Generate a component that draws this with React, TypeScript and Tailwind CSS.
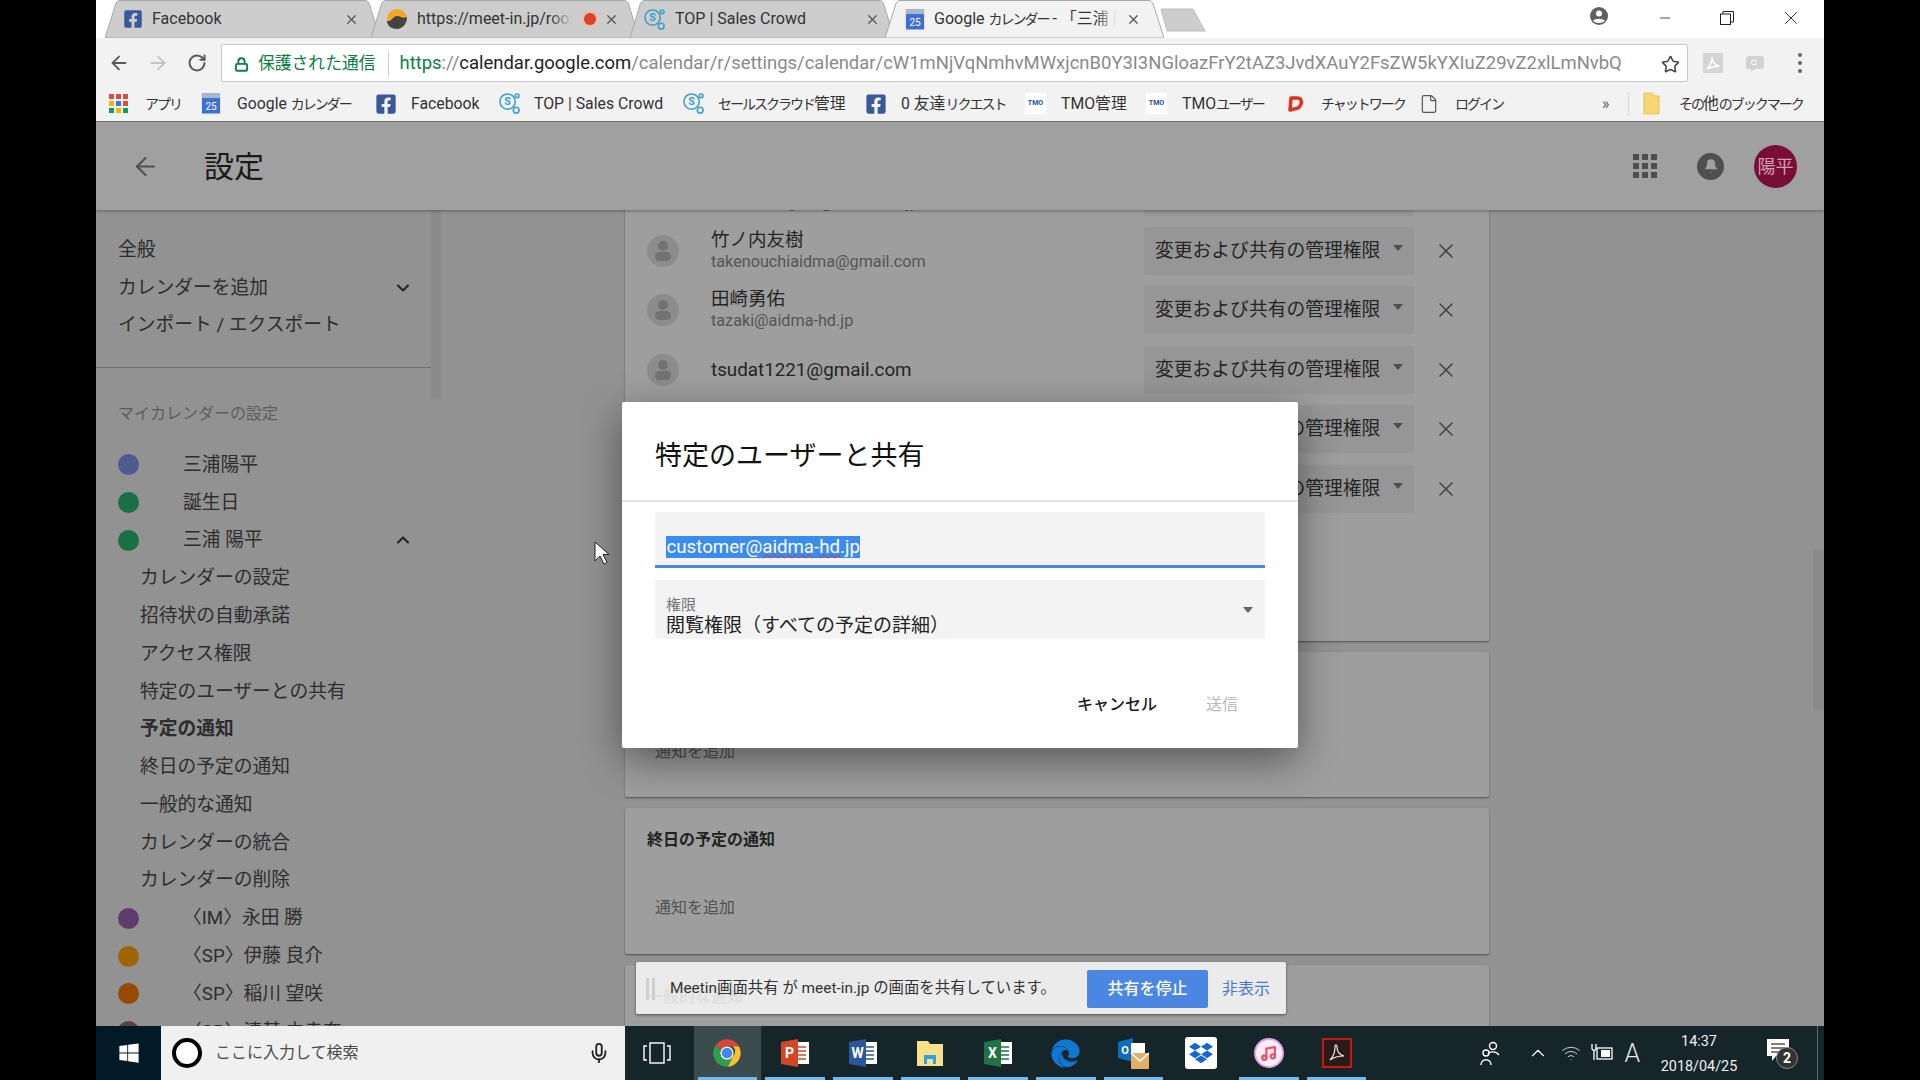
import { ArrowLeft, ArrowRight, RotateCw, Lock, Star, X, ChevronDown, ChevronUp, Bell, Mic, Minus, Wifi, Music, File } from 'lucide-react';
import { FaFacebookSquare, FaWindows, FaEdge, FaDropbox } from 'react-icons/fa';
import type { ReactNode } from 'react';

const font = "font-['Roboto','Noto_Sans_CJK_JP',sans-serif]";

// kana in the browser chrome is narrower than the kanji next to it
function K({ children }: { children: ReactNode }) {
  return <span className="text-[14px] tracking-[-2px]">{children}</span>;
}

function FbIcon({ size = 22 }: { size?: number }) {
  return <FaFacebookSquare size={size} className="text-[#3b5998] shrink-0" />;
}

function CalIcon() {
  return (
    <svg viewBox="0 0 22 24" className="w-[20px] h-[23px] shrink-0">
      <rect x="1" y="1" width="20" height="22" fill="#3f6fd1" />
      <rect x="1" y="1" width="20" height="5" fill="#a9b8c9" />
      <text x="11" y="19" textAnchor="middle" fontSize="11" fill="#fff" fontFamily="Roboto">25</text>
    </svg>
  );
}

function CrowdIcon() {
  return (
    <svg viewBox="0 0 24 24" className="w-[23px] h-[23px] shrink-0" fill="none" stroke="#3c9fc9" strokeWidth="1.6">
      <circle cx="10" cy="10" r="8" />
      <circle cx="20" cy="4" r="2" />
      <circle cx="19" cy="19" r="3" />
      <text x="10" y="14" textAnchor="middle" fontSize="11" fill="#3c9fc9" stroke="none" fontFamily="Roboto" fontWeight="700">S</text>
    </svg>
  );
}

function TmoIcon() {
  return (
    <span className="w-[21px] h-[21px] bg-white flex items-center justify-center shrink-0 text-[7px] font-bold text-[#1a4fa0] font-['Roboto',sans-serif]">
      TMO
    </span>
  );
}

function AppsIcon() {
  const colors = ['#e04b3a', '#e04b3a', '#e04b3a', '#f4b400', '#3b78e7', '#e04b3a', '#0f9d58', '#f4b400', '#0f9d58'];
  return (
    <span className="grid grid-cols-3 gap-[2px] w-[19px] shrink-0">
      {colors.map((c, i) => (
        <svg key={i} viewBox="0 0 5 5" className="w-[5px] h-[5px]">
          <rect width="5" height="5" fill={c} />
        </svg>
      ))}
    </span>
  );
}

function Tab({ box, active, icon, title, extra, fade }: { box: string; active?: boolean; icon: ReactNode; title: ReactNode; extra?: ReactNode; fade?: boolean }) {
  return (
    <div className={`relative h-[38px] shrink-0 -mr-[9px] flex items-center gap-[9px] ${box} ${active ? 'z-10' : ''}`}>
      <svg viewBox="0 0 100 38" preserveAspectRatio="none" className="absolute inset-0 w-full h-full">
        <polygon
          points="0,38 4,3 5,0.5 95,0.5 96,3 100,38"
          fill={active ? '#f2f2f2' : '#cdcdcd'}
          stroke="#a8a8a8"
          strokeWidth="1"
          vectorEffect="non-scaling-stroke"
        />
      </svg>
      <span className="relative shrink-0 flex">{icon}</span>
      <span className="relative flex-1 overflow-hidden whitespace-nowrap text-[16px] text-[#333]">
        {title}
        {fade && (
          <span className={`absolute right-0 top-0 bottom-0 w-[22px] bg-gradient-to-l to-transparent ${active ? 'from-[#f2f2f2]' : 'from-[#cdcdcd]'}`} />
        )}
      </span>
      {extra && <span className="relative shrink-0 flex -mr-[4px]">{extra}</span>}
      <X size={15} className="relative shrink-0 text-[#555]" />
    </div>
  );
}

function TabStrip() {
  return (
    <div className="h-[38px] bg-white flex items-end pl-[9px] relative">
      <Tab box="w-[275px] pl-[18px] pr-[21px]" title="Facebook" icon={<FbIcon size={20} />} />
      <Tab
        box="w-[268px] pl-[15px] pr-[20px]"
        title="https://meet-in.jp/room"
        fade
        icon={
          <svg viewBox="0 0 22 22" className="w-[22px] h-[22px]">
            <circle cx="11" cy="11" r="10" fill="#f5a623" />
            <path d="M1 13c5 1 6-5 10-5s5 3 10 1c0 7-5 12-10 12S1 18 1 13z" fill="#444" />
          </svg>
        }
        extra={
          <svg viewBox="0 0 18 18" className="w-[18px] h-[18px]">
            <circle cx="9" cy="9" r="8" fill="#f3b8a8" />
            <circle cx="9" cy="9" r="6" fill="#d9432b" />
          </svg>
        }
      />
      <Tab box="w-[264px] pl-[13px] pr-[14px]" title="TOP | Sales Crowd" icon={<CrowdIcon />} />
      <Tab
        box="w-[279px] pl-[20px] pr-[23px]"
        active
        fade
        title={<>Google <K>カレンダー</K> - 「三浦 陽平</>}
        icon={<CalIcon />}
      />
      <svg viewBox="0 0 46 24" className="w-[46px] h-[24px] ml-[5px] mb-[6px] shrink-0">
        <polygon points="1,1 33,1 45,23 7,23" fill="#cdcdcd" stroke="#bdbdbd" />
      </svg>
      <div className="ml-auto flex items-center self-start h-[36px]">
        <svg viewBox="0 0 20 20" className="w-[20px] h-[20px] mr-[48px] mt-[-4px]">
          <circle cx="10" cy="10" r="9" fill="#606060" />
          <circle cx="10" cy="7.5" r="3" fill="#fff" />
          <path d="M4 15c2-3 10-3 12 0-3 2.500-9 2.500-12 0z" fill="#fff" />
        </svg>
        <Minus size={16} strokeWidth={1.2} className="text-[#222] mr-[47px]" />
        <svg viewBox="0 0 14 14" className="w-[14px] h-[14px] mr-[46px]" fill="none" stroke="#222">
          <rect x="0.500" y="3" width="10" height="10.500" />
          <path d="M3 3V0.500h10.500V11H11" />
        </svg>
        <X size={22} strokeWidth={1} className="text-[#222] mr-[22px]" />
      </div>
    </div>
  );
}

function Toolbar() {
  return (
    <div className="h-[50px] bg-[#f2f2f2] flex items-center pl-[4px]">
      <div className="w-[38px] flex justify-center">
        <ArrowLeft size={22} className="text-[#5a5a5a]" />
      </div>
      <div className="w-[39px] flex justify-center">
        <ArrowRight size={22} className="text-[#c4c4c4]" />
      </div>
      <div className="w-[39px] flex justify-center">
        <RotateCw size={20} strokeWidth={2.4} className="text-[#5a5a5a]" />
      </div>
      <div className="ml-[5px] w-[1467px] h-[38px] bg-white border border-[#c9c9c9] rounded-[2px] flex items-center pl-[12px] pt-[2px] whitespace-nowrap overflow-hidden">
        <Lock size={15} strokeWidth={3} className="text-[#0b8043] shrink-0" />
        <span className="ml-[9px] text-[16.8px] text-[#0b8043]">保護された通信</span>
        <span className="ml-[13px] w-px h-[26px] bg-[#cfcfcf]" />
        <span className="ml-[10px] text-[18.47px] text-[#8a8a8a]">
          <span className="text-[#0b8043]">https</span>://<span className="text-[#222]">calendar.google.com</span>
          /calendar/r/settings/calendar/cW1mNjVqNmhvMWxjcnB0Y3I3NGloazFrY2tAZ3JvdXAuY2FsZW5kYXIuZ29vZ2xlLmNvbQ
        </span>
        <Star size={19} strokeWidth={2} className="ml-auto mr-[7px] text-[#444] shrink-0" />
      </div>
      <svg viewBox="0 0 20 20" className="ml-[15px] w-[20px] h-[20px] shrink-0">
        <rect width="20" height="20" fill="#d5d5d5" />
        <path d="M4 16c3-3 5-8 5-12 0 5 3 8 7 9-4 0-8 1-12 3z" fill="none" stroke="#fff" strokeWidth="1.400" />
      </svg>
      <svg viewBox="0 0 20 20" className="ml-[22px] w-[20px] h-[20px] shrink-0">
        <rect x="1" y="3" width="18" height="13" rx="2" fill="#d2d2d2" />
        <path d="M6 16v3l4-3z" fill="#d2d2d2" />
        <circle cx="9" cy="9.500" r="2.500" fill="none" stroke="#fff" />
      </svg>
      <div className="ml-[33px] flex flex-col gap-[4px]">
        <svg viewBox="0 0 4 4" className="w-[4px] h-[4px]"><circle cx="2" cy="2" r="2" fill="#666" /></svg>
        <svg viewBox="0 0 4 4" className="w-[4px] h-[4px]"><circle cx="2" cy="2" r="2" fill="#666" /></svg>
        <svg viewBox="0 0 4 4" className="w-[4px] h-[4px]"><circle cx="2" cy="2" r="2" fill="#666" /></svg>
      </div>
    </div>
  );
}

function Bookmark({ w, icon, label }: { w: string; icon: ReactNode; label: ReactNode }) {
  return (
    <div className={`flex items-center shrink-0 ${w}`}>
      <span className="w-[36px] shrink-0 flex">{icon}</span>
      <span className="text-[15.8px] text-[#333] whitespace-nowrap">{label}</span>
    </div>
  );
}

function BookmarkBar() {
  return (
    <div className="h-[34px] bg-[#f2f2f2] border-b border-[#6f6f6f] flex items-center pl-[13px] pb-[2px]">
      <Bookmark w="w-[92px]" icon={<AppsIcon />} label={<K>アプリ</K>} />
      <Bookmark w="w-[174px]" icon={<CalIcon />} label={<>Google <K>カレンダー</K></>} />
      <Bookmark w="w-[123px]" icon={<FbIcon />} label="Facebook" />
      <Bookmark w="w-[184px]" icon={<CrowdIcon />} label="TOP | Sales Crowd" />
      <Bookmark w="w-[183px]" icon={<CrowdIcon />} label={<><K>セールスクラウド</K>管理</>} />
      <Bookmark w="w-[160px]" icon={<FbIcon />} label={<>0 友達<K>リクエスト</K></>} />
      <Bookmark w="w-[121px]" icon={<TmoIcon />} label="TMO管理" />
      <Bookmark w="w-[139px]" icon={<TmoIcon />} label={<>TMO<K>ユーザー</K></>} />
      <Bookmark
        w="w-[134px]"
        icon={
          <svg viewBox="0 0 20 20" className="w-[20px] h-[20px]" fill="none" stroke="#e0321c" strokeWidth="3.500" strokeLinejoin="round">
            <path d="M5 16l1-12h6c4 0 5 3 4 6s-3 5-7 5z" />
          </svg>
        }
        label={<K>チャットワーク</K>}
      />
      <Bookmark w="w-[183px]" icon={<File size={20} strokeWidth={1.400} className="text-[#555]" />} label={<K>ログイン</K>} />
      <span className="text-[16px] text-[#555] w-[26px]">»</span>
      <span className="w-px h-[24px] bg-[#d5d5d5] mr-[14px]" />
      <Bookmark
        w="w-[180px]"
        icon={
          <svg viewBox="0 0 18 24" className="w-[17px] h-[23px]">
            <path d="M1 1h9l2 3h5v19H1z" fill="#f7d774" stroke="#e3c25a" />
          </svg>
        }
        label={<><K>その</K>他<K>のブックマーク</K></>}
      />
    </div>
  );
}

function AppHeader() {
  return (
    <div className="h-[88px] shrink-0 bg-[#a0a0a0] relative z-10 shadow-[0_1px_3px_rgba(0,0,0,0.35)] flex items-center pl-[35px]">
      <ArrowLeft size={29} strokeWidth={1.700} className="text-[#4f4f4f]" />
      <span className="ml-[44px] mt-[1px] text-[30px] text-[#1a1a1a]">設定</span>
      <div className="ml-auto grid grid-cols-3 gap-[3px] w-[24px] mr-[40px]">
        {Array.from({ length: 9 }).map((_, i) => (
          <svg key={i} viewBox="0 0 6 6" className="w-[6px] h-[6px]">
            <rect width="6" height="6" fill="#4f4f4f" />
          </svg>
        ))}
      </div>
      <div className="w-[27px] h-[27px] rounded-full bg-[#4f4f4f] flex items-center justify-center mr-[30px]">
        <Bell size={16} fill="#a0a0a0" strokeWidth={0} />
      </div>
      <div className="w-[43px] h-[43px] rounded-full bg-[#780e35] flex items-center justify-center text-[18px] text-[#d0a0b2] mr-[27px]">
        陽平
      </div>
    </div>
  );
}

function Dot({ color }: { color: string }) {
  return <span className={`w-[21px] h-[21px] rounded-full shrink-0 ${color}`} />;
}

function SideRow({ children, className = '' }: { children: ReactNode; className?: string }) {
  return <div className={`h-[37.800px] flex items-center text-[18.750px] text-[#2d2d2d] whitespace-nowrap ${className}`}>{children}</div>;
}

function CalRow({ color, name, chevron }: { color: string; name: string; chevron?: boolean }) {
  return (
    <SideRow className="pl-[22px]">
      <Dot color={color} />
      <span className="ml-[44px]">{name}</span>
      {chevron && <ChevronUp size={20} strokeWidth={2.500} className="absolute left-[297px] text-[#222]" />}
    </SideRow>
  );
}

function Sidebar() {
  return (
    <div className="w-[335px] shrink-0 pt-[21px] relative">
      <SideRow className="pl-[22px]">全般</SideRow>
      <SideRow className="pl-[22px] relative">
        カレンダーを追加
        <ChevronDown size={20} strokeWidth={2.500} className="absolute left-[297px] text-[#222]" />
      </SideRow>
      <SideRow className="pl-[22px]">インポート / エクスポート</SideRow>
      <div className="mt-[23px] border-t border-[#6f6f6f]" />
      <div className="pl-[22px] pt-[35.500px] text-[16px] leading-[20px] text-[#5e5e5e]">マイカレンダーの設定</div>
      <div className="mt-[22px]">
        <CalRow color="bg-[#4e5a90]" name="三浦陽平" />
        <CalRow color="bg-[#1b6f46]" name="誕生日" />
        <CalRow color="bg-[#1b6f46]" name="三浦 陽平" chevron />
        <SideRow className="pl-[44px]">カレンダーの設定</SideRow>
        <SideRow className="pl-[44px]">招待状の自動承諾</SideRow>
        <SideRow className="pl-[44px]">アクセス権限</SideRow>
        <SideRow className="pl-[44px]">特定のユーザーとの共有</SideRow>
        <SideRow className="pl-[44px] font-bold text-[#1f1f1f]">予定の通知</SideRow>
        <SideRow className="pl-[44px]">終日の予定の通知</SideRow>
        <SideRow className="pl-[44px]">一般的な通知</SideRow>
        <SideRow className="pl-[44px]">カレンダーの統合</SideRow>
        <SideRow className="pl-[44px]">カレンダーの削除</SideRow>
        <CalRow color="bg-[#603c6c]" name="〈IM〉永田 勝" />
        <CalRow color="bg-[#a06502]" name="〈SP〉伊藤 良介" />
        <CalRow color="bg-[#984905]" name="〈SP〉稲川 望咲" />
        <CalRow color="bg-[#5c4239]" name="〈SP〉清基 由幸奈" />
      </div>
      <div className="absolute left-[335px] top-0 w-[10px] h-[189px] bg-[#8a8a8a]" />
    </div>
  );
}

function ShareRow({ name, email }: { name?: string; email?: string }) {
  return (
    <div className="h-[59.400px] flex items-center">
      <span className="ml-[22px] w-[32px] h-[32px] rounded-full bg-[#8c8c8c] flex flex-col items-center justify-center gap-[1px] shrink-0">
        <span className="w-[10px] h-[10px] rounded-full bg-[#727272]" />
        <span className="w-[16px] h-[9px] rounded-full bg-[#727272]" />
      </span>
      <div className={`ml-[32px] flex-1 min-w-0 ${name ? 'pb-[2px]' : ''}`}>
        {name && <div className="text-[18.500px] leading-[24px] text-[#252525]">{name}</div>}
        {email && <div className={name ? 'text-[16.200px] leading-[20px] text-[#555]' : 'text-[18.800px] text-[#252525]'}>{email}</div>}
      </div>
      <div className="ml-[1px] w-[270px] h-[48px] bg-[#969696] rounded-[2px] flex items-center pl-[11px] shrink-0">
        <span className="text-[18.800px] text-[#252525] whitespace-nowrap">変更および共有の管理権限</span>
        <svg viewBox="0 0 10 6" className="ml-[13px] mb-[6px] w-[10px] h-[6px]">
          <path d="M0 0h10L5 6z" fill="#4f4f4f" />
        </svg>
      </div>
      <X size={24} strokeWidth={1.600} className="ml-[20px] mr-[31px] text-[#444]" />
    </div>
  );
}

function NoticeCard({ h, title, bottom }: { h: string; title: string; bottom?: string }) {
  return (
    <div className={`mt-[11px] ${h} bg-[#9e9e9e] rounded-[2px] shadow-[0_1px_2px_rgba(0,0,0,0.45)] pl-[22px] pt-[22px] shrink-0`}>
      <div className="text-[16px] leading-[20px] font-bold text-[#222]">{title}</div>
      {bottom && <div className="mt-[48px] pl-[8px] text-[16px] leading-[20px] text-[#525252]">{bottom}</div>}
    </div>
  );
}

function CalendarApp() {
  return (
    <div className="flex-1 min-h-0 bg-[#929292] flex flex-col relative overflow-hidden">
      <AppHeader />
      <div className="flex flex-1 min-h-0 overflow-hidden">
        <Sidebar />
        <div className="ml-[194px] w-[864px] shrink-0 -mt-[48px]">
          <div className="h-[479px] bg-[#9e9e9e] rounded-[2px] shadow-[0_1px_2px_rgba(0,0,0,0.45)]">
            <ShareRow name="三浦 陽平" email="masaru.nagata@aidma-hd.jp" />
            <ShareRow name="竹ノ内友樹" email="takenouchiaidma@gmail.com" />
            <ShareRow name="田崎勇佑" email="tazaki@aidma-hd.jp" />
            <ShareRow email="tsudat1221@gmail.com" />
            <ShareRow />
            <ShareRow />
          </div>
          <NoticeCard h="h-[145px]" title="予定の通知" bottom="通知を追加" />
          <NoticeCard h="h-[146px]" title="終日の予定の通知" bottom="通知を追加" />
          <NoticeCard h="h-[146px]" title="一般的な通知" bottom="通知を追加" />
        </div>
      </div>
      <div className="absolute left-[1717px] top-[428px] w-[11px] h-[160px] bg-[#8a8a8a]" />
    </div>
  );
}

function ShareDialog() {
  return (
    <div className="absolute left-[526px] top-[402px] w-[676px] h-[346px] bg-white rounded-[2px] shadow-[0_12px_40px_rgba(0,0,0,0.45)] z-20 flex flex-col">
      <div className="h-[100px] border-b-2 border-[#e4e4e4] pl-[33px] pt-[10px] flex items-center text-[27px] text-[#111] shrink-0">
        特定のユーザーと共有
      </div>
      <div className="mx-[33px] mt-[10px] h-[56px] bg-[#f3f3f3] border-b-[3px] border-[#4a86e2] rounded-t-[2px] pl-[11px] flex items-end pb-[7px] shrink-0">
        <span className="bg-[#3b8cf0] text-white text-[18.700px] leading-[22px] px-[0.500px] font-['Roboto',sans-serif]">
          customer@<span className="underline decoration-wavy decoration-[#e0263c] decoration-1 underline-offset-1">aidma</span>-
          <span className="underline decoration-wavy decoration-[#e0263c] decoration-1 underline-offset-1">hd</span>.jp
        </span>
      </div>
      <div className="mx-[33px] mt-[12px] h-[59px] bg-[#f3f3f3] rounded-[2px] pl-[11px] pr-[12px] pt-[12px] flex items-center shrink-0">
        <div className="flex-1 min-w-0">
          <div className="text-[15px] leading-[20px] text-[#757575]">権限</div>
          <div className="text-[19px] leading-[22px] text-[#222]">閲覧権限（すべての予定の詳細）</div>
        </div>
        <svg viewBox="0 0 10 6" className="w-[10px] h-[6px] -mt-[12px]">
          <path d="M0 0h10L5 6z" fill="#666" />
        </svg>
      </div>
      <div className="mt-[44px] flex justify-end items-center pr-[60px] gap-[49px] text-[16px] leading-[44px]">
        <span className="font-medium text-[#1a1a1a]">キャンセル</span>
        <span className="text-[#b9b9b9]">送信</span>
      </div>
    </div>
  );
}

function ShareBanner() {
  return (
    <div className="absolute left-[540px] top-[962px] w-[650px] h-[52px] bg-[#f3f3f3]/90 rounded-[2px] shadow-[0_1px_3px_rgba(0,0,0,0.5)] z-20 flex items-center pl-[10px] pt-[1px] text-[16px] whitespace-nowrap">
      <span className="flex gap-[3px] mr-[15px]">
        <span className="w-[3px] h-[22px] bg-[#cfcfcf]" />
        <span className="w-[3px] h-[22px] bg-[#cfcfcf]" />
      </span>
      <span className="text-[#333] w-[417px] text-[15.400px]">Meetin画面共有 が meet-in.jp の画面を共有しています。</span>
      <span className="w-[121px] h-[38px] bg-[#4a86e2] rounded-[2px] text-white font-medium flex items-center justify-center">共有を停止</span>
      <span className="ml-[14px] text-[#4a78c8]">非表示</span>
    </div>
  );
}

function Cursor() {
  return (
    <svg viewBox="0 0 16 24" className="absolute left-[498px] top-[541px] w-[16px] h-[24px] z-30">
      <path d="M1 1v19l5-5 4 8 3-1.500-4-8h6z" fill="#fff" stroke="#222" strokeWidth="1" />
    </svg>
  );
}

function OfficeIcon({ color, letter }: { color: string; letter: string }) {
  return (
    <svg viewBox="0 0 30 30" className="w-[30px] h-[30px]">
      <rect x="13" y="4" width="16" height="22" fill="#fff" />
      <path d="M17 9h9M17 13h9M17 17h9M17 21h9" stroke={color} strokeWidth="1.500" />
      <path d="M1 4l17-3v28L1 26z" fill={color} />
      <text x="9.500" y="20" textAnchor="middle" fontSize="14" fontWeight="700" fill="#fff" fontFamily="Roboto">{letter}</text>
    </svg>
  );
}

function TaskItem({ active, running = true, children }: { active?: boolean; running?: boolean; children: ReactNode }) {
  return (
    <div className={`relative w-[67.700px] h-full flex items-center justify-center shrink-0 ${active ? 'bg-[#3b4b4d]' : ''}`}>
      {children}
      {running && <span className="absolute bottom-0 left-[4px] right-[4px] h-[3px] bg-[#76b9ed]" />}
    </div>
  );
}

function Taskbar() {
  return (
    <div className="h-[54px] shrink-0 bg-[#15252a] flex items-center text-white relative z-30">
      <div className="w-[65px] h-full bg-[#021a26] flex items-center justify-center shrink-0">
        <FaWindows size={22} />
      </div>
      <div className="w-[464px] h-full bg-[#f0f0f0] flex items-center pl-[11px] pr-[15px] shrink-0">
        <span className="w-[30px] h-[30px] rounded-full border-[4px] border-black bg-white shrink-0" />
        <span className="ml-[13px] text-[16px] text-[#4c4c4c]">ここに入力して検索</span>
        <Mic size={22} className="ml-auto text-[#222]" />
      </div>
      <div className="w-[69px] flex justify-center pr-[6px] shrink-0">
        <svg viewBox="0 0 28 22" className="w-[28px] h-[22px]" fill="none" stroke="#fff" strokeWidth="1.400">
          <rect x="7" y="1" width="14" height="20" />
          <path d="M4 4H1v14h3M24 4h3v14h-3" />
        </svg>
      </div>
      <div className="flex h-full -ml-[0.500px]">
        <TaskItem active>
          <svg viewBox="0 0 48 48" className="w-[30px] h-[30px]">
            <path d="M43.050 13A22 22 0 0 1 25 46l8.500-16.500A11 11 0 0 0 33 13z" fill="#fbc02d" />
            <path d="M6.300 11A22 22 0 0 0 25 46l8.500-16.500L14 19z" fill="#2e9e4f" />
            <path d="M24 2a22 22 0 0 1 19.050 11H24a11 11 0 0 0-9.900 6.200L6.300 11A22 22 0 0 1 24 2z" fill="#dc4437" />
            <circle cx="24" cy="24" r="10.500" fill="#fff" />
            <circle cx="24" cy="24" r="8.500" fill="#4285f4" />
          </svg>
        </TaskItem>
        <TaskItem><OfficeIcon color="#d24625" letter="P" /></TaskItem>
        <TaskItem><OfficeIcon color="#2b579a" letter="W" /></TaskItem>
        <TaskItem>
          <svg viewBox="0 0 30 30" className="w-[30px] h-[30px]">
            <path d="M2 3h11l2 3h13v22H2z" fill="#fbe08a" />
            <path d="M9 26v-9h12v9h-3v-5h-6v5z" fill="#2ea3dd" />
          </svg>
        </TaskItem>
        <TaskItem><OfficeIcon color="#217346" letter="X" /></TaskItem>
        <TaskItem><FaEdge size={29} className="text-[#0f78d4]" /></TaskItem>
        <TaskItem>
          <svg viewBox="0 0 32 32" className="w-[32px] h-[32px]">
            <path d="M1 5l15-4v24L1 21z" fill="#0f6cbd" />
            <rect x="14" y="6" width="14" height="10" fill="#fff" />
            <rect x="14" y="16" width="18" height="16" fill="#e3ae6a" />
            <path d="M14 16l9 8 9-8" fill="none" stroke="#fff" strokeWidth="1.500" />
            <text x="8" y="17" textAnchor="middle" fontSize="11" fontWeight="700" fill="#fff" fontFamily="Roboto">O</text>
          </svg>
        </TaskItem>
        <TaskItem running={false}>
          <span className="w-[32px] h-[32px] bg-white rounded-[3px] flex items-center justify-center">
            <FaDropbox size={24} className="text-[#1866d6]" />
          </span>
        </TaskItem>
        <TaskItem>
          <span className="w-[30px] h-[30px] rounded-full bg-[#fbeef3] border-[2px] border-[#d9a6e6] flex items-center justify-center">
            <Music size={17} strokeWidth={3} className="text-[#ef4a6b]" />
          </span>
        </TaskItem>
        <TaskItem>
          <span className="w-[30px] h-[30px] bg-[#2a1a18] border-[2px] border-[#c8170c] flex items-center justify-center">
            <svg viewBox="0 0 20 20" className="w-[20px] h-[20px]">
              <path d="M3 17c3-3 5-8 5-13 0-3 2-3 2 0 0 5 3 8 7 9-5 0-10 1-14 4z" fill="none" stroke="#eee" strokeWidth="1.200" />
            </svg>
          </span>
        </TaskItem>
      </div>
      <svg viewBox="0 0 22 26" className="ml-[109px] w-[22px] h-[26px] shrink-0" fill="none" stroke="#fff" strokeWidth="1.400">
        <circle cx="14" cy="6" r="3.500" />
        <path d="M9 14c2-3 8-3 11 1" />
        <circle cx="7" cy="13" r="3" />
        <path d="M2 25c0-7 10-7 10 0" />
      </svg>
      <ChevronUp size={22} strokeWidth={1.200} className="ml-[26px] shrink-0" />
      <Wifi size={20} strokeWidth={1.200} className="ml-[12px] text-[#cfcfcf] shrink-0" />
      <svg viewBox="0 0 22 20" className="ml-[10px] w-[22px] h-[20px] shrink-0" fill="none" stroke="#fff" strokeWidth="1.300">
        <rect x="6" y="5" width="15" height="11" />
        <rect x="10" y="7" width="9" height="7" fill="#fff" stroke="none" />
        <path d="M1 1v5l2 2 2-2V1M3 8v9" />
      </svg>
      <span className="ml-[11px] text-[25px] font-light text-[#e5e5e5] leading-none shrink-0">A</span>
      <div className="ml-[15px] w-[88px] pt-[1px] text-center text-[14.400px] leading-[25px] text-[#f0f0f0] shrink-0">
        <div>14:37</div>
        <div>2018/04/25</div>
      </div>
      <div className="relative ml-[23px] w-[24px] h-[30px] shrink-0">
        <svg viewBox="0 0 24 26" className="w-[24px] h-[26px]">
          <path d="M1 1h22v17H10l-4 5v-5H1z" fill="#fff" />
          <path d="M5 6h14M5 10h14M5 14h9" stroke="#555" strokeWidth="1.400" />
        </svg>
        <span className="absolute left-[10px] top-[9px] w-[22px] h-[22px] rounded-full bg-[#333] border border-[#888] flex items-center justify-center text-[14px] font-bold text-white">2</span>
      </div>
      <span className="ml-auto mr-[6px] w-px h-full bg-[#5a6a70]" />
    </div>
  );
}

export default function App() {
  return (
    <div className={`w-[1920px] h-[1080px] bg-black overflow-hidden flex justify-center ${font}`}>
      <div className="w-[1728px] h-full flex flex-col relative">
        <TabStrip />
        <Toolbar />
        <BookmarkBar />
        <CalendarApp />
        <ShareDialog />
        <ShareBanner />
        <Cursor />
        <Taskbar />
      </div>
    </div>
  );
}
